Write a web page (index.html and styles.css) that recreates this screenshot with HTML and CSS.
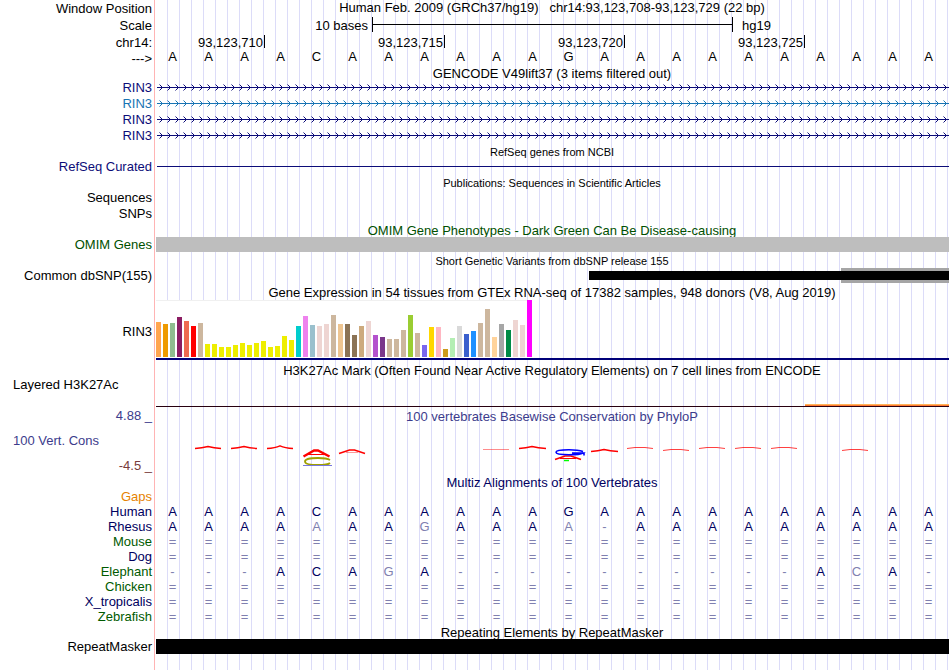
FILE: index.html
```html
<!DOCTYPE html>
<html lang="en">
<head>
<meta charset="utf-8">
<title>Human chr14:93,123,708-93,123,729</title>
<link rel="stylesheet" href="styles.css">
</head>
<body>
<main class="browser">
  <div class="row tall">
    <div class="label">Window Position</div>
    <div class="title upper">Human Feb. 2009 (GRCh37/hg19) &nbsp; chr14:93,123,708-93,123,729 (22 bp)</div>
  </div>
  <div class="row tall">
    <div class="label">Scale</div>
    <div class="bases scale">
      <span class="scale-size">10 bases</span>
      <span class="scale-bar"></span>
      <span class="assembly">hg19</span>
    </div>
  </div>
  <div class="row mid">
    <div class="label lower">chr14:</div>
    <div class="bases ruler">
      <span class="tick first">93,123,710</span>
      <span class="tick">93,123,715</span>
      <span class="tick">93,123,720</span>
      <span class="tick">93,123,725</span>
    </div>
  </div>
  <div class="row mid">
    <div class="label lower">---&gt;</div>
    <div class="bases letters" id="sequence"></div>
  </div>

  <div class="row short"><div class="title">GENCODE V49lift37 (3 items filtered out)</div></div>
  <div class="row mid navy"><div class="label">RIN3</div><svg class="gene"></svg></div>
  <div class="row mid blue"><div class="label">RIN3</div><svg class="gene"></svg></div>
  <div class="row mid navy"><div class="label">RIN3</div><svg class="gene"></svg></div>
  <div class="row mid navy"><div class="label">RIN3</div><svg class="gene"></svg></div>

  <div class="row"><div class="title small">RefSeq genes from NCBI</div></div>
  <div class="row mid navy"><div class="label">RefSeq Curated</div><div class="line"></div></div>

  <div class="row"><div class="title small">Publications: Sequences in Scientific Articles</div></div>
  <div class="row mid"><div class="label">Sequences</div></div>
  <div class="row mid"><div class="label">SNPs</div></div>

  <div class="row green"><div class="title lower">OMIM Gene Phenotypes - Dark Green Can Be Disease-causing</div></div>
  <div class="row green"><div class="label">OMIM Genes</div><div class="block gray"></div></div>

  <div class="row mid"><div class="title small deep">Short Genetic Variants from dbSNP release 155</div></div>
  <div class="row">
    <div class="label">Common dbSNP(155)</div>
    <div class="bases variants"><div class="variant"></div><div class="variant repeat"></div></div>
  </div>

  <div class="row tall"><div class="title deep">Gene Expression in 54 tissues from GTEx RNA-seq of 17382 samples, 948 donors (V8, Aug 2019)</div></div>
  <div class="row expression">
    <div class="label">RIN3</div>
    <div class="chart-base"><div class="chart" id="chart"></div></div>
  </div>

  <div class="row histone-title"><div class="title">H3K27Ac Mark (Often Found Near Active Regulatory Elements) on 7 cell lines from ENCODE</div></div>
  <div class="row histone">
    <div class="label left">Layered H3K27Ac</div>
    <div class="bases signal"><div class="peak"></div></div>
  </div>

  <div class="row conservation">
    <div class="axis">
      <span>4.88 _</span>
      <span class="axis-name">100 Vert. Cons</span>
      <span class="negative">-4.5 _</span>
    </div>
    <div class="plot">
      <div class="title">100 vertebrates Basewise Conservation by PhyloP</div>
      <svg class="logo" viewBox="0 0 792 47" preserveAspectRatio="none" fill="none" stroke="#f00">
        <path stroke-width="1.3" d="M39 21.5Q46 21 52 19.5Q58 21 65 21.5M75 21.5Q82 21 88 19.5Q94 21 101 21.5M111 21.5Q119 21 124 18.800Q129 21 137 21.500M363 21.500Q370 21 376 19.500Q382 21 390 21.500M435 24.500Q442 24 448 22.500Q454 24 462 24.500"/>
        <path stroke-width="2.4" d="M147.500 29.500L158 23.500H162L173.500 29.500"/>
        <path stroke-width="1" d="M152 27.500H168"/>
        <path stroke-width="1" opacity=".4" d="M190 25.500H202"/>
        <path stroke-width="1.6" d="M183 26.500L193.500 23H198.500L209 26.500M399 32.500L409 29H415L425 32.500"/>
        <path stroke-width="1" d="M404 31.500H420"/>
        <path stroke="#a0a000" stroke-width="1.8" d="M174 33Q171 31 162 31Q149 31 149 34.500Q149 38 162 38Q172 38 174 36"/>
        <path stroke="#77d" stroke-width="1" d="M147 38.500H176"/>
        <path stroke="#00f" stroke-width="1.6" d="M427 24.500Q422 22.800 413 22.800Q400 22.800 400 25.300Q400 27.800 413 27.800Q424 27.800 427 26H416M428 26V28.500"/>
        <path stroke="#0f0" stroke-width="1.5" d="M408 33.500H413"/>
        <path stroke-width="1" opacity=".45" d="M327 22.500H353"/>
        <path stroke-width="1.2" opacity=".75" d="M471 21.500L479 20.500H489L497 21.500M507 23.500L515 22.500H525L533 23.500M543 21.500L551 20.500H561L569 21.500M579 21.500L587 20.500H597L605 21.500M615 21.500L623 20.500H633L641 21.500M686 23.500L694 22.500H704L712 23.500"/>
      </svg>
    </div>
  </div>

  <div class="row ink"><div class="title lower">Multiz Alignments of 100 Vertebrates</div></div>
  <table class="alignment"><tbody id="alignment"></tbody></table>

  <div class="row"><div class="title lower">Repeating Elements by RepeatMasker</div></div>
  <div class="row"><div class="label">RepeatMasker</div><div class="block"></div></div>
</main>
<script src="tracks.js"></script>
</body>
</html>
```
FILE: styles.css
```css
* { box-sizing: border-box; }

body {
  margin: 0;
  background: #fff;
  color: #000;
  font: 13px/15px "Liberation Sans", Arial, Helvetica, sans-serif;
}

.browser {
  position: relative;
  z-index: 0;
  min-height: 100vh;
  padding-right: 2px;
  overflow: hidden;
}

/* Half-base guide lines behind every track */
.browser::before {
  content: "";
  position: absolute;
  z-index: -1;
  inset: 0 2px 0 156px;
  background: linear-gradient(to left, #dcdcf8 1px, transparent 1px) 0 0 / calc(100% / 66) 100%;
}

/* Divider between labels and tracks */
.browser::after {
  content: "";
  position: absolute;
  z-index: -1;
  inset: 0 auto 0 154px;
  width: 1px;
  background: #ffb4b4;
}

.row {
  display: grid;
  grid-template-columns: 156px minmax(0, 1fr);
  grid-template-rows: 100%;
  height: 15px;
  line-height: 15px;
}
.short { height: 14px; }
.mid { height: 16px; }
.tall { height: 17px; line-height: 17px; }
.upper { line-height: 15px; }
.lower { line-height: 17px; }

.label {
  padding-right: 4px;
  text-align: right;
  white-space: nowrap;
}
.label.left { padding-left: 13px; text-align: left; }
.title { grid-column: 2; text-align: center; white-space: nowrap; }
.small { font-size: 11px; line-height: 17px; }
.deep { line-height: 19px; }

.navy { color: #0c0c78; }
.blue { color: #1874b4; }
.green { color: #005000; }
.ink { color: #000060; }

.bases { display: grid; grid-template-columns: repeat(22, minmax(0, 1fr)); }

.scale-size { grid-column: span 6; padding-right: 4px; text-align: right; }
.scale-bar {
  grid-column: span 10;
  height: 15px;
  margin-right: -1px;
  border: solid #000;
  border-width: 0 1px;
  background: linear-gradient(#000, #000) 0 7px / 100% 1px no-repeat;
}
.assembly { grid-column: span 6; padding-left: 10px; }

.tick {
  grid-column: span 5;
  height: 13px;
  margin: 1px -1px 0 0;
  padding-right: 1px;
  border-right: 1px solid #000;
  text-align: right;
}
.tick.first { grid-column: span 3; }

.letters { line-height: 14px; }
.letters span { padding-right: 3px; text-align: center; }

.gene { display: block; width: 100%; height: 16px; padding-left: 1px; overflow: visible; }
.line { height: 1px; margin: 7px -1px 0 1px; background: currentColor; }

.block { margin-right: -1px; background: #000; }
.gray { background: #bebebe; }

.variants { margin-right: -1px; }
.variant { grid-column: 13 / span 7; height: 9px; margin-top: 3px; background: #000; }
.variant.repeat {
  grid-column: 20 / span 3;
  height: 15px;
  margin: 0;
  border: solid #a5a5a5;
  border-width: 3px 0;
}

.expression { height: 60px; line-height: 63px; }
.chart-base { margin-right: -1px; border-bottom: 2px solid #000078; }
.chart {
  display: flex;
  gap: 2px;
  align-items: flex-end;
  width: max-content;
  height: 58px;
  padding-bottom: 1px;
  background: linear-gradient(#f0f0f0, #f0f0f0) 0 0 / 100% 1px no-repeat, #fff;
}
.bar { width: 5px; }

.histone-title { height: 17px; line-height: 21px; }
.histone { height: 30px; }
.signal { align-items: end; margin-right: -1px; border-bottom: 1px solid #28000f; }
.peak {
  grid-column: 19 / span 4;
  height: 2px;
  border-top: 1px solid #ffb45a;
  background: #ff7832;
}

.conservation { height: 67px; color: #3c3c8c; }
.axis {
  display: flex;
  flex-direction: column;
  justify-content: space-between;
  padding: 1px 4px 1px 13px;
  text-align: right;
}
.axis-name { text-align: left; }
.negative { color: #783c3c; }
.plot { padding-top: 2px; }
.logo { display: block; width: 100%; height: 47px; margin-top: 3px; }

.alignment { width: 100%; table-layout: fixed; border-collapse: collapse; color: #000060; }
.alignment th { width: 156px; padding: 0 4px 0 0; font-weight: normal; text-align: right; }
.alignment td { padding: 0 3px 0 0; text-align: center; }
.alignment tr { height: 15px; }
.alignment .gaps { color: #e68200; }
.alignment .green { color: #005a00; }
.alignment .faded { color: #8080b0; }
```
FILE: tracks.js
```js
const SVG = "http://www.w3.org/2000/svg";

// Reference bases under the ruler
const reference = "AAAACAAAAAAGAAAAAAAAAA";
const sequence = document.getElementById("sequence");
for (const base of reference) {
  const cell = document.createElement("span");
  cell.textContent = base;
  sequence.append(cell);
}

// Intron line with an arrow every eight pixels
function strokePath(d, width) {
  const path = document.createElementNS(SVG, "path");
  path.setAttribute("d", d);
  path.setAttribute("fill", "none");
  path.setAttribute("stroke", "currentColor");
  path.setAttribute("stroke-width", width);
  return path;
}
function drawGenes() {
  for (const gene of document.querySelectorAll(".gene")) {
    const width = gene.clientWidth;
    let arrows = "";
    for (let x = 2.5; x < width - 2; x += 8) arrows += `M${x} 4.5l3 3l-3 3`;
    gene.replaceChildren(strokePath(`M0 7.5H${width}`, 1), strokePath(arrows, 1));
  }
}
drawGenes();
addEventListener("resize", drawGenes);

// Median expression by tissue: [height, colour]
const tissues = [
  [35, "#ffa54f"], [33, "#ee9a00"], [34, "#8fbc8f"], [40, "#8b1c62"], [36, "#ee6a50"], [31, "#ff0000"], [34, "#cdb79e"],
  [13, "#eeee00"], [13, "#eeee00"], [10, "#eeee00"], [10, "#eeee00"], [12, "#eeee00"], [14, "#eeee00"], [12, "#eeee00"],
  [14, "#eeee00"], [16, "#eeee00"], [10, "#eeee00"], [11, "#eeee00"], [21, "#eeee00"], [17, "#eeee00"],
  [31, "#00cdcd"], [41, "#ee82ee"], [32, "#9ac0cd"], [31, "#eed5d2"], [33, "#eed5d2"], [42, "#cdb79e"], [33, "#eec591"],
  [33, "#8b7355"], [22, "#8b7355"], [31, "#cdaa7d"], [36, "#eed5d2"], [22, "#b452cd"], [20, "#7a378b"], [18, "#cdb79e"],
  [18, "#cdb79e"], [27, "#cdb79e"], [42, "#9acd32"], [24, "#cdb79e"], [12, "#7a67ee"], [30, "#ffd700"], [30, "#ffb6c1"],
  [8, "#cd9b1d"], [19, "#b4eeb4"], [31, "#d9d9d9"], [23, "#3a5fcd"], [26, "#1e90ff"], [34, "#cdb79e"], [48, "#cdb79e"],
  [20, "#ffd39b"], [33, "#a6a6a6"], [27, "#008b45"], [37, "#eed5d2"], [32, "#eed5d2"], [57, "#ff00ff"]
];
const chart = document.getElementById("chart");
for (const [height, colour] of tissues) {
  const bar = document.createElement("div");
  bar.className = "bar";
  bar.style.height = height + "px";
  bar.style.background = colour;
  chart.append(bar);
}

// Aligned species: lower case marks a base that differs from the reference
const species = [
  ["Gaps", "gaps", " ".repeat(22)],
  ["Human", "", reference],
  ["Rhesus", "", "AAAAaAAgAAAa-AAAAAAAAA"],
  ["Mouse", "green", "=".repeat(22)],
  ["Dog", "", "=".repeat(22)],
  ["Elephant", "green", "---ACAgA----------AcA-"],
  ["Chicken", "green", "=".repeat(22)],
  ["X_tropicalis", "", "=".repeat(22)],
  ["Zebrafish", "green", "=".repeat(22)]
];
const alignment = document.getElementById("alignment");
for (const [name, group, bases] of species) {
  const row = alignment.insertRow();
  const head = document.createElement("th");
  head.scope = "row";
  head.className = group;
  head.textContent = name;
  row.append(head);
  for (const base of bases) {
    const cell = row.insertCell();
    cell.textContent = base.toUpperCase();
    if (!/[A-Z]/.test(base)) cell.className = "faded";
  }
}
```
